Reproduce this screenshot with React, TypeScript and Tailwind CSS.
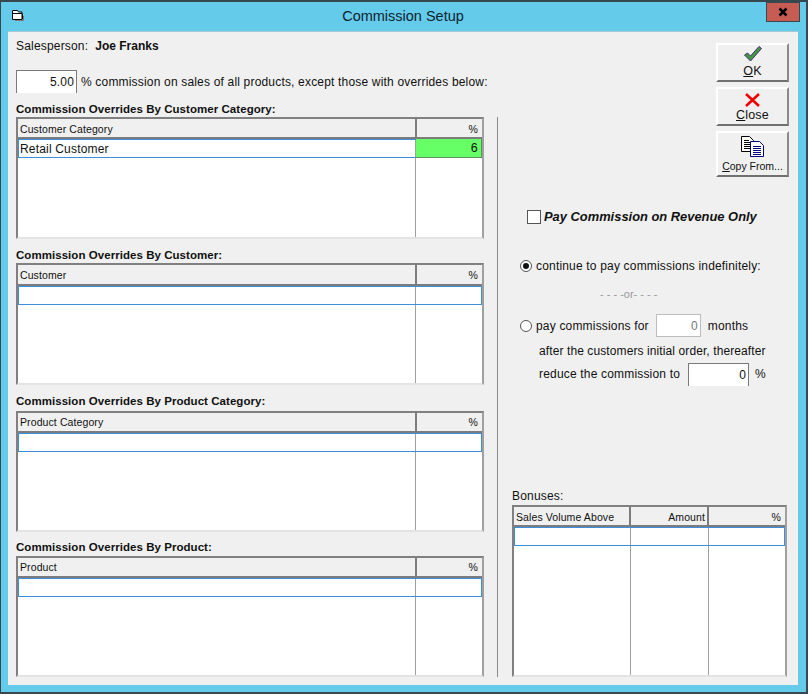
const font = "font-['Liberation_Sans',Arial,sans-serif]";

function GridCell({ className = "", children }: { className?: string; children?: React.ReactNode }) {
  return <div className={`flex h-[19px] shrink-0 items-center ${className}`}>{children}</div>;
}

type OverrideTableProps = {
  title: string;
  column: string;
  row?: string;
  value?: string;
  className?: string;
  titleGap?: string;
  height?: string;
  headerClass?: string;
};

function OverrideTable({ title, column, row, value, className = "", titleGap = "", height = "h-[122px]", headerClass = "h-[20px] leading-[20px]" }: OverrideTableProps) {
  return (
    <div className={className}>
      <div className={`h-[15px] text-[11.5px] leading-[15px] font-bold tracking-[0.05px] text-[#111] ${titleGap}`}>{title}</div>
      <div className={`flex ${height} w-[468px] flex-col border-t-2 border-l-2 border-[#808080] border-r-2 border-b-2 border-r-[#a0a0a0] border-b-[#e3e3e3] bg-white`}>
        <div className={`flex shrink-0 border-b-2 border-[#7c7c7c] bg-[#f0f0f0] text-[10.5px] tracking-[0.1px] ${headerClass}`}>
          <div className="w-[399px] border-r-2 border-[#7c7c7c] pl-[2px]">{column}</div>
          <div className="flex-1 pr-[4px] text-right">%</div>
        </div>
        <div className="flex flex-1">
          <div className="w-[398px] border-r border-[#a0a0a0]">
            <GridCell className="-mr-px border-y border-l border-[#3c8fe0] pl-px text-[12px]">{row}</GridCell>
          </div>
          <div className="flex-1">
            {value ? (
              <GridCell className="justify-end border-r border-b border-r-[#5f8f5f] border-b-[#5f8f5f] bg-[#66ff66] pr-[3px] text-[12.5px]">{value}</GridCell>
            ) : (
              <GridCell className="border-y border-r border-[#3c8fe0]" />
            )}
          </div>
        </div>
      </div>
    </div>
  );
}

function CommandButton({ height, icon, label, hotkey, small }: { height: string; icon: React.ReactNode; label: string; hotkey: string; small?: boolean }) {
  return (
    <button className={`flex w-[73px] flex-col items-center justify-end border-2 border-white border-r-[#8a8a8a] border-b-[#707070] bg-[#f0f0f0] ${height} ${small ? "text-[10.5px] tracking-normal" : "text-[12.5px]"} pb-[2px] leading-[14px]`}>
      {icon}
      <span><span className="underline">{hotkey}</span>{label}</span>
    </button>
  );
}

function TextBox({ value, className = "" }: { value: string; className?: string }) {
  return <div className={`flex h-[23px] items-center justify-end bg-white pr-[2px] ${className}`}>{value}</div>;
}

function Radio({ checked }: { checked?: boolean }) {
  return (
    <span className="mr-[4px] flex h-[12px] w-[12px] items-center justify-center rounded-full border border-[#555] bg-white">
      {checked && <span className="h-[6px] w-[6px] rounded-full bg-[#111]" />}
    </span>
  );
}

export default function App() {
  return (
    <div className={`relative h-[694px] w-[808px] overflow-hidden bg-[#3a4650] tracking-[0.18px] text-[#111] ${font}`}>
      <div className="flex h-[692px] w-[806px] flex-col border-t-2 border-l border-[#37474f] bg-[#65cbeb] pl-[7px]">
        <div className="flex h-[29px] shrink-0 items-start">
          <svg className="mt-[8px] ml-[4px] shrink-0" width="12" height="11" viewBox="0 0 12 11">
            <path d="M.5.500h5l1 1.500h3.500v7.500H.5z" fill="#fff" stroke="#000" />
            <path d="M1 3.500h9M10.500 4v5" stroke="#000" />
            <path d="M11.500 6v4.500H3" stroke="#777" fill="none" />
          </svg>
          <div className="mt-[4px] flex-1 pl-[16px] text-center text-[14.5px] leading-[20px] tracking-normal text-[#0c2430]">Commission Setup</div>
          <div className="mr-[6px] flex h-[20px] w-[34px] shrink-0 items-center justify-center border border-[#37474f] bg-[#c75c52]">
            <svg width="10" height="10" viewBox="0 0 10 10">
              <path d="M1.500 1.500l7 7M8.500 1.500l-7 7" stroke="#000" strokeWidth="2.500" />
            </svg>
          </div>
        </div>
        <div className="flex h-[654px] w-[790px] border-t border-[#a8c8d4] bg-[#f0f0f0] pt-[6px] pl-[8px]">
          <div className="flex w-[480px] shrink-0 flex-col">
            <div className="h-[16px] text-[12px] leading-[16px]">
              Salesperson:&nbsp; <span className="text-[12px] font-bold tracking-normal">Joe Franks</span>
            </div>
            <div className="mt-[17px] flex h-[21px] items-center text-[12px] whitespace-nowrap">
              <TextBox value="5.00" className="h-[21px] w-[61px] border-x border-t border-[#7a7a7a]" />
              <span className="ml-[4px]">% commission on sales of all products, except those with overrides below:</span>
            </div>
            <OverrideTable className="mt-[10px]" title="Commission Overrides By Customer Category:" column="Customer Category" row="Retail Customer" value="6" />
            <OverrideTable className="mt-[9px]" headerClass="h-[21px] leading-[20px]" title="Commission Overrides By Customer:" column="Customer" />
            <OverrideTable className="mt-[9px]" titleGap="mb-[2px]" height="h-[121px]" headerClass="h-[20px] leading-[18px]" title="Commission Overrides By Product Category:" column="Product Category" />
            <OverrideTable className="mt-[8px]" titleGap="mb-px" height="h-[121px]" headerClass="h-[20px] leading-[18px]" title="Commission Overrides By Product:" column="Product" />
          </div>
          <div className="mt-[79px] ml-px h-[560px] w-px shrink-0 bg-[#8a8a8a]" />
          <div className="flex min-w-0 flex-1 flex-col pl-[14px] text-[12px]">
            <div className="mt-[5px] flex flex-col items-end gap-[5px] pr-[9px]">
              <CommandButton height="h-[39px]" hotkey="O" label="K" icon={
                <svg width="18" height="16" viewBox="0 0 18 16" className="mb-[2px]">
                  <path d="M.5 9l3-2 3 3L15 .5l2.500 2L6.500 15z" fill="#3f9a3f" stroke="#4b2a7a" strokeWidth="1" />
                </svg>
              } />
              <CommandButton height="h-[39px]" hotkey="C" label="lose" icon={
                <svg width="15" height="14" viewBox="0 0 15 14" className="mb-px">
                  <path d="M1 1l13 12M14 1L1 13" stroke="#ee0000" strokeWidth="2.500" />
                </svg>
              } />
              <CommandButton small height="h-[46px]" hotkey="C" label="opy From..." icon={
                <svg width="23" height="21" viewBox="0 0 23 21" className="mb-[2px]">
                  <path d="M.5.500h8l4 4v11H.5z" fill="#fff" stroke="#000" />
                  <path d="M3 4.500h5M3 6.500h7M3 8.500h7M3 10.500h7M3 12.500h7" stroke="#000" />
                  <path d="M9.500 5.500h9l4 4v11h-13z" fill="#fff" stroke="#000080" />
                  <path d="M12 10.500h8M12 12.500h8M12 14.500h8M12 16.500h8M12 18.500h8" stroke="#000080" />
                </svg>
              } />
            </div>
            <label className="mt-[32px] ml-[15px] flex h-[16px] items-center text-[12.9px] leading-none font-bold tracking-normal whitespace-nowrap italic">
              <span className="mr-[3px] h-[14px] w-[14px] border border-[#555] bg-white" />
              Pay Commission on Revenue Only
            </label>
            <div className="mt-[33px] ml-[8px] flex h-[16px] items-center whitespace-nowrap">
              <Radio checked />continue to pay commissions indefinitely:
            </div>
            <div className="mt-[13px] ml-[88px] h-[14px] text-[11px] leading-[14px] tracking-normal text-[#999]">- - - -or- - - -</div>
            <div className="mt-[13px] ml-[8px] flex h-[23px] items-center whitespace-nowrap">
              <Radio />pay commissions for
              <TextBox value="0" className="ml-[7px] w-[45px] border border-[#bdbdbd] text-[#777]" />
              <span className="ml-[7px]">months</span>
            </div>
            <div className="mt-[4px] ml-[27px] h-[20px] leading-[20px] tracking-[0.1px] whitespace-nowrap">after the customers initial order, thereafter</div>
            <div className="mt-[2px] ml-[27px] flex h-[22px] items-center whitespace-nowrap">
              reduce the commission to
              <TextBox value="0" className="ml-[8px] h-[22px] w-[61px] border-x border-t border-[#7a7a7a]" />
              <span className="ml-[6px]">%</span>
            </div>
            <div className="mt-[104px] h-[15px] leading-[15px]">Bonuses:</div>
            <div className="mt-px flex h-[172px] w-[275px] flex-col border-t-2 border-l-2 border-[#808080] border-r-2 border-b-2 border-r-[#a0a0a0] border-b-[#e3e3e3] bg-white">
              <div className="flex h-[20px] shrink-0 border-b-2 border-[#7c7c7c] bg-[#f0f0f0] text-[10.5px] leading-[20px] tracking-[0.1px]">
                <div className="w-[117px] border-r-2 border-[#7c7c7c] pl-[2px]">Sales Volume Above</div>
                <div className="w-[78px] border-r-2 border-[#7c7c7c] pr-[2px] text-right">Amount</div>
                <div className="flex-1 pr-[4px] text-right">%</div>
              </div>
              <div className="flex flex-1">
                <div className="w-[117px] border-r border-[#a0a0a0]">
                  <GridCell className="-mr-px border-y border-l border-[#3c8fe0]" />
                </div>
                <div className="w-[78px] border-r border-[#a0a0a0]">
                  <GridCell className="-mr-px border-y border-[#3c8fe0]" />
                </div>
                <div className="flex-1">
                  <GridCell className="border-y border-r border-[#3c8fe0]" />
                </div>
              </div>
            </div>
          </div>
        </div>
      </div>
    </div>
  );
}
